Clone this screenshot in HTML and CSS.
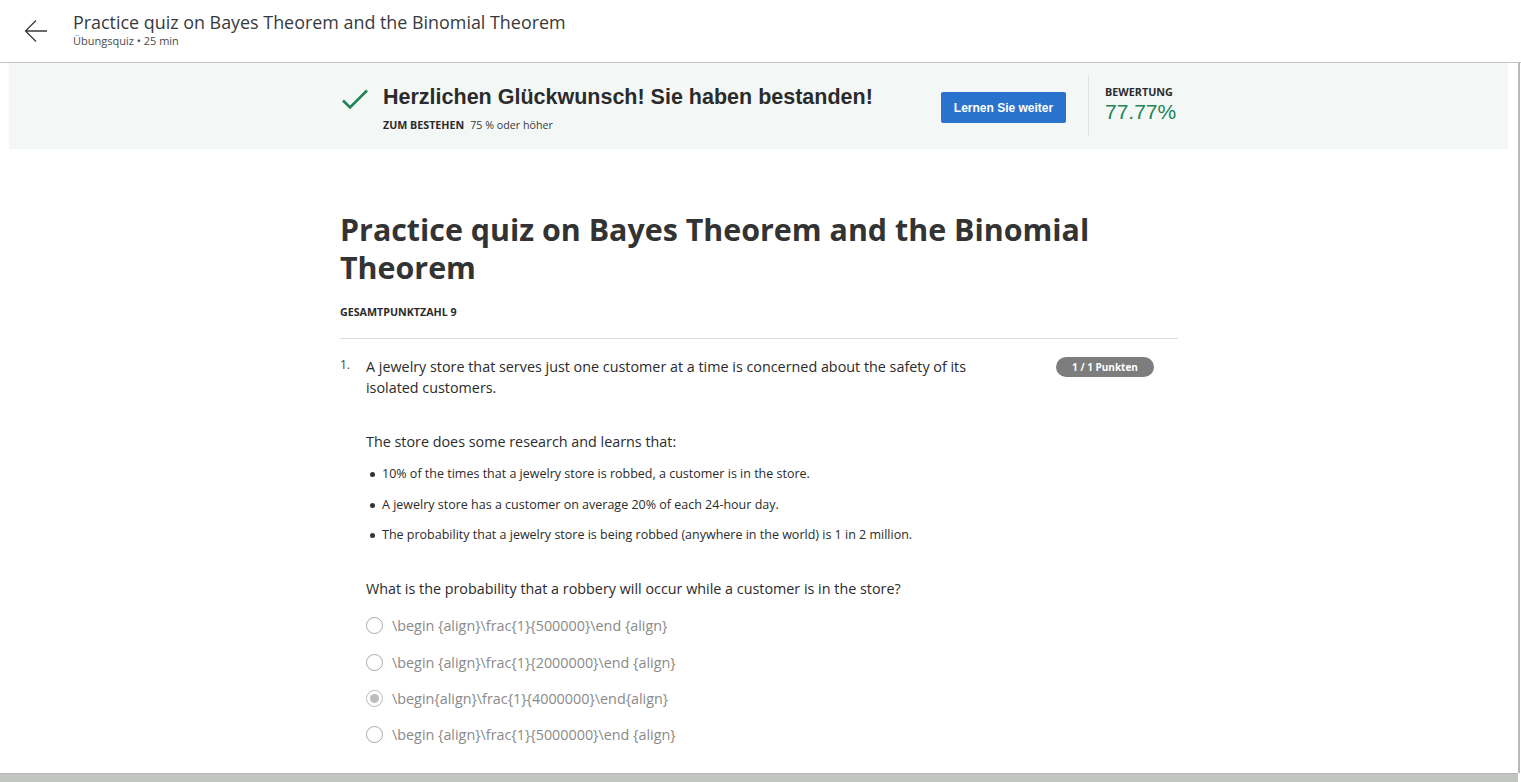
FILE: index.html
```html
<!DOCTYPE html>
<html lang="de">
<head>
<meta charset="utf-8">
<title>Practice quiz</title>
<link rel="stylesheet" href="styles.css">
</head>
<body>
<div class="app">
  <header class="topbar">
    <div class="back">
      <svg width="24" height="24" viewBox="0 0 24 24" aria-hidden="true"><path d="M23 12H2M12 1.5L1.5 12L12 22.5" fill="none" stroke="#3a3a3a" stroke-width="1.3"/></svg>
    </div>
    <div class="topbar-text">
      <div class="topbar-title">Practice quiz on Bayes Theorem and the Binomial Theorem</div>
      <div class="topbar-sub">Übungsquiz • 25 min</div>
    </div>
  </header>
  <main class="main">
    <section class="band">
      <div class="band-inner">
        <div class="result">
          <svg class="check" width="28" height="22" viewBox="0 0 28 22" aria-hidden="true"><path d="M2 11.5L9 18.5L26 1.5" fill="none" stroke="#1f8354" stroke-width="2.6"/></svg>
          <div class="result-text">
            <div class="result-title">Herzlichen Glückwunsch! Sie haben bestanden!</div>
            <div class="result-sub"><b>ZUM BESTEHEN</b><span>75 % oder höher</span></div>
          </div>
        </div>
        <button class="btn">Lernen Sie weiter</button>
        <div class="divider"></div>
        <div class="score">
          <div class="score-label">BEWERTUNG</div>
          <div class="score-value">77.77%</div>
        </div>
      </div>
    </section>
    <section class="content">
      <h1 class="title">Practice quiz on Bayes Theorem and the Binomial Theorem</h1>
      <div class="total">GESAMTPUNKTZAHL 9</div>
      <hr class="rule">
      <div class="question">
        <div class="qnum">1.</div>
        <div class="qbody">
          <p class="qtext">A jewelry store that serves just one customer at a time is concerned about the safety of its isolated customers.</p>
          <p class="qtext lead">The store does some research and learns that:</p>
          <ul class="facts">
            <li>10% of the times that a jewelry store is robbed, a customer is in the store.</li>
            <li>A jewelry store has a customer on average 20% of each 24-hour day.</li>
            <li>The probability that a jewelry store is being robbed (anywhere in the world) is 1 in 2 million.</li>
          </ul>
          <p class="qtext ask">What is the probability that a robbery will occur while a customer is in the store?</p>
          <div class="options">
            <div class="opt"><span class="radio"></span><span>\begin {align}\frac{1}{500000}\end {align}</span></div>
            <div class="opt"><span class="radio"></span><span>\begin {align}\frac{1}{2000000}\end {align}</span></div>
            <div class="opt"><span class="radio on"></span><span>\begin{align}\frac{1}{4000000}\end{align}</span></div>
            <div class="opt"><span class="radio"></span><span>\begin {align}\frac{1}{5000000}\end {align}</span></div>
          </div>
        </div>
        <div class="badge">1 / 1 Punkten</div>
      </div>
    </section>
  </main>
  <div class="bottombar"></div>
</div>
</body>
</html>
```
FILE: styles.css
```css
* { box-sizing: border-box; }
html, body { margin: 0; padding: 0; }
body {
  font-family: "Open Sans", "Noto Sans", sans-serif;
  color: #333;
  background: #fff;
  width: 1521px;
  height: 782px;
  overflow: hidden;
}
.app {
  height: 782px;
  display: flex;
  flex-direction: column;
}
.topbar {
  height: 63px;
  flex: none;
  border-bottom: 1px solid #c4c4c4;
  display: flex;
  align-items: flex-start;
  padding-left: 24px;
}
.back {
  width: 24px;
  height: 24px;
  margin-top: 19px;
}
.topbar-text {
  margin-left: 25px;
  padding-top: 10px;
}
.topbar-title {
  font-size: 17.9px;
  line-height: 24px;
  color: #373a3c;
}
.topbar-sub {
  font-size: 11px;
  line-height: 14px;
  color: #4a4a4a;
}
.main {
  flex: 1;
  width: 1520px;
  border-right: 2px solid #b8b8b8;
  overflow: hidden;
}
.band {
  margin: 0 10px 0 9px;
  background: #f3f8f7;
  height: 86px;
  padding: 13px 0;
}
.band-inner {
  width: 838px;
  margin-left: 331px;
  height: 60px;
  display: flex;
  align-items: center;
}
.result {
  flex: 1;
  display: flex;
  align-items: flex-start;
  padding-left: 1px;
  margin-top: 4px;
}
.check { margin-top: 5px; }
.result-text { margin-left: 14px; }
.result-title {
  font-family: "Liberation Sans", Arial, sans-serif;
  font-weight: 700;
  font-size: 21.5px;
  line-height: 26px;
  color: #2b2b2b;
}
.result-sub {
  font-size: 10.7px;
  line-height: 14px;
  margin-top: 8px;
  color: #3a3a3a;
}
.result-sub b { font-weight: 700; margin-right: 6px; color: #2b2b2b; }
.btn {
  width: 125px;
  height: 31px;
  background: #2a73cc;
  color: #fff;
  border: 0;
  border-radius: 2px;
  font-family: "Liberation Sans", Arial, sans-serif;
  font-weight: 700;
  font-size: 12px;
  padding: 0;
  margin-top: 3px;
  margin-left: -1px;
}
.divider {
  align-self: stretch;
  width: 1px;
  background: #dfe3e2;
  margin: 0 16px 0 22px;
}
.score {
  width: 73px;
  margin-top: -2px;
}
.score-label {
  font-size: 10.8px;
  font-weight: 700;
  line-height: 14px;
  color: #2b2b2b;
}
.score-value {
  font-family: "Liberation Sans", Arial, sans-serif;
  font-size: 21px;
  line-height: 26px;
  color: #1f8354;
}
.content {
  width: 838px;
  margin: 0 auto 0 340px;
}
.title {
  font-size: 30.4px;
  font-weight: 700;
  line-height: 38px;
  margin: 62px 0 0;
  color: #333;
}
.total {
  font-size: 10.7px;
  font-weight: 700;
  line-height: 14px;
  margin-top: 18px;
  color: #2b2b2b;
}
.rule {
  border: 0;
  border-top: 1px solid #dcdcdc;
  margin: 19px 0 0;
  height: 0;
}
.question {
  display: flex;
  align-items: flex-start;
  margin-top: 17px;
}
.qnum {
  width: 26px;
  font-size: 12px;
  line-height: 18px;
  color: #444;
}
.qbody {
  width: 632px;
}
.qtext {
  margin: 0;
  font-size: 14.35px;
  line-height: 21px;
  color: #2b2b2b;
}
.lead { margin-top: 33px; }
.facts {
  list-style: none;
  margin: 13px 0 0;
  padding: 0;
}
.facts li {
  position: relative;
  font-size: 12.5px;
  line-height: 18px;
  padding-left: 16px;
  margin-bottom: 12.6px;
  color: #2b2b2b;
}
.facts li::before {
  content: "";
  position: absolute;
  left: 4px;
  top: 7px;
  width: 5px;
  height: 5px;
  border-radius: 50%;
  background: #333;
}
.ask { margin-top: 34px; }
.options { margin-top: 16px; }
.opt {
  display: flex;
  align-items: center;
  height: 21px;
  margin-bottom: 15.4px;
  font-size: 14.35px;
  color: #8a8a8a;
}
.radio {
  width: 17px;
  height: 17px;
  border: 1.5px solid #a9a9a9;
  border-radius: 50%;
  margin-right: 9px;
  flex: none;
  display: flex;
  align-items: center;
  justify-content: center;
}
.radio.on { border-color: #b9b9b9; }
.radio.on::after {
  content: "";
  width: 9px;
  height: 9px;
  border-radius: 50%;
  background: #bdbdbd;
}
.badge {
  margin-left: auto;
  margin-right: 24px;
  margin-top: 1px;
  width: 98px;
  height: 20px;
  border-radius: 10px;
  background: #7d7d7d;
  color: #fff;
  font-weight: 700;
  font-size: 10px;
  line-height: 20px;
  text-align: center;
}
.bottombar {
  height: 9px;
  flex: none;
  width: 1518px;
  background: #c3c5c3;
  border-top: 1px solid #b4b6b4;
}
```
